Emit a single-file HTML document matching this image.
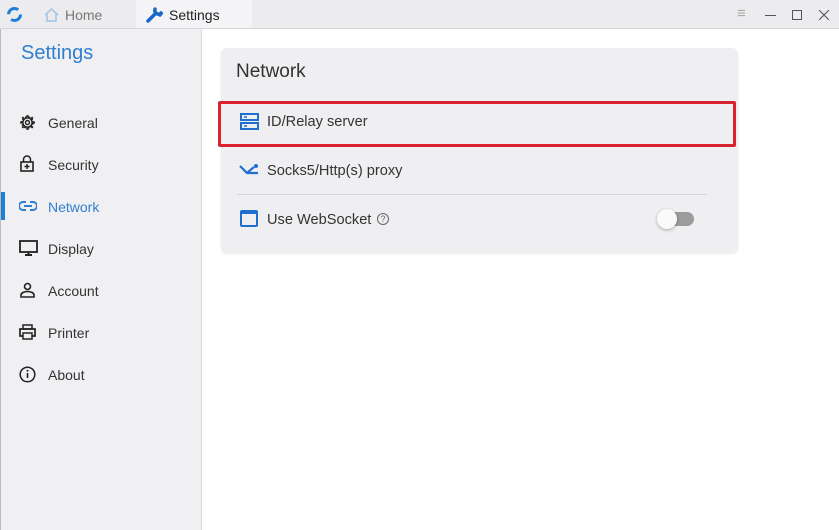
<!DOCTYPE html>
<html><head><style>
*{margin:0;padding:0;box-sizing:border-box}
body{width:839px;height:530px;overflow:hidden;font-family:"Liberation Sans",sans-serif;background:#fff;position:relative}
.tb{position:absolute;left:0;top:0;width:839px;height:29px;background:#ececee;border-bottom:1px solid #d6d6d8}
.tab2{position:absolute;left:136px;top:0;width:116px;height:28px;background:#f4f4f6}
.t{position:absolute;font-size:14px;white-space:nowrap}
.c{font-size:14.6px}
.side{position:absolute;left:0;top:29px;width:202px;height:501px;background:#f0f0f3;border-right:1px solid #dcdcdf;border-left:1px solid #bbb}
.card{position:absolute;left:221px;top:48px;width:517px;height:205px;background:#efeff1;border-radius:6px;box-shadow:0 1px 2px rgba(0,0,0,.08)}
svg{position:absolute}
</style></head><body>
<div class="tb"></div><div class="tab2"></div>
<svg style="left:6px;top:6px" width="17" height="17" viewBox="0 0 17 17"><circle cx="8.5" cy="8.5" r="6" fill="none" stroke="#1e7fd6" stroke-width="3" stroke-dasharray="13 6"/></svg>
<svg style="left:44px;top:8px" width="15" height="14" viewBox="0 0 15 14"><path d="M1 7L7.5 1 14 7M3 6v7h9V6" fill="none" stroke="#9cc3ea" stroke-width="1.5"/></svg>
<div class="t" style="left:65px;top:7px;color:#777">Home</div>
<svg style="left:146px;top:6px" width="18" height="17" viewBox="0 0 18 17"><path d="M2 15L10 7M9 3a4 4 0 0 0 5 5l2-2-2 3" stroke="#1a66c9" stroke-width="3.5" fill="none" stroke-linecap="round"/></svg>
<div class="t" style="left:169px;top:7px;color:#222">Settings</div>
<div class="t" style="left:737px;top:5px;color:#aaa;font-size:15px">≡</div>
<div style="position:absolute;left:765px;top:15px;width:11px;height:1px;background:#555"></div>
<div style="position:absolute;left:792px;top:10px;width:10px;height:10px;border:1px solid #555"></div>
<svg style="left:819px;top:10px" width="10" height="10" viewBox="0 0 10 10"><path d="M0 0L10 10M10 0L0 10" stroke="#555" stroke-width="1.1"/></svg>
<div class="side"></div>
<div class="t" style="left:21px;top:42px;color:#2f7fd0;font-size:20px">Settings</div>
<div style="position:absolute;left:1px;top:192px;width:4px;height:28px;background:#1e7fd6"></div>
<svg style="left:19px;top:114px" width="17" height="17" viewBox="0 0 17 17"><circle cx="8.5" cy="8.5" r="5.5" fill="none" stroke="#222" stroke-width="1.6" stroke-dasharray="2.2 1.1"/><circle cx="8.5" cy="8.5" r="4.6" fill="none" stroke="#222" stroke-width="1.4"/><circle cx="8.5" cy="8.5" r="2" fill="none" stroke="#222" stroke-width="1.4"/><path d="M8.5 1v2M8.5 14v2M1 8.5h2M14 8.5h2M3.2 3.2l1.4 1.4M12.4 12.4l1.4 1.4M3.2 13.8l1.4-1.4M12.4 4.6l1.4-1.4" stroke="#222" stroke-width="2"/></svg>
<div class="t" style="left:48px;top:115px;color:#333">General</div>
<svg style="left:20px;top:155px" width="15" height="17" viewBox="0 0 15 17"><rect x="1" y="7" width="12" height="9" fill="none" stroke="#222" stroke-width="1.6"/><path d="M3.5 7V4.5a3.5 3.5 0 0 1 7 0V7M7 9v5M4.5 11.5h5" fill="none" stroke="#222" stroke-width="1.5"/></svg>
<div class="t" style="left:48px;top:157px;color:#333">Security</div>
<svg style="left:19px;top:200px" width="18" height="12" viewBox="0 0 18 12"><path d="M7 2H4a4 4 0 0 0 0 8h3M11 2h3a4 4 0 0 1 0 8h-3M5 6h8" fill="none" stroke="#2f7fd0" stroke-width="2"/></svg>
<div class="t" style="left:48px;top:199px;color:#2f7fd0">Network</div>
<svg style="left:19px;top:240px" width="19" height="17" viewBox="0 0 19 17"><rect x="1" y="1" width="17" height="11" fill="none" stroke="#222" stroke-width="1.8"/><path d="M6 15h7M9.5 12v3" stroke="#222" stroke-width="2"/></svg>
<div class="t" style="left:48px;top:241px;color:#333">Display</div>
<svg style="left:20px;top:282px" width="15" height="16" viewBox="0 0 15 16"><circle cx="7.5" cy="4.5" r="3" fill="none" stroke="#222" stroke-width="1.6"/><path d="M1 15v-2c0-2 3-3.5 6.5-3.5S14 11 14 13v2z" fill="none" stroke="#222" stroke-width="1.6"/></svg>
<div class="t" style="left:48px;top:283px;color:#333">Account</div>
<svg style="left:19px;top:324px" width="17" height="16" viewBox="0 0 17 16"><rect x="1" y="5" width="15" height="7" fill="none" stroke="#222" stroke-width="1.7"/><rect x="4" y="1" width="9" height="4" fill="none" stroke="#222" stroke-width="1.5"/><rect x="4" y="9" width="9" height="6" fill="#f0f0f3" stroke="#222" stroke-width="1.5"/></svg>
<div class="t" style="left:48px;top:325px;color:#333">Printer</div>
<svg style="left:19px;top:366px" width="17" height="17" viewBox="0 0 17 17"><circle cx="8.5" cy="8.5" r="7.3" fill="none" stroke="#222" stroke-width="1.5"/><path d="M8.5 7v5" stroke="#222" stroke-width="1.6"/><circle cx="8.5" cy="4.8" r="1" fill="#222"/></svg>
<div class="t" style="left:48px;top:367px;color:#333">About</div>
<div class="card"></div>
<div class="t" style="left:236px;top:61px;font-size:19px;color:#333">Network</div>
<div style="position:absolute;left:218px;top:101px;width:518px;height:46px;border:3px solid #d9232e;border-radius:2px"></div>
<svg style="left:240px;top:113px" width="19" height="17" viewBox="0 0 19 17"><rect x="1" y="1" width="17" height="6" fill="none" stroke="#1e6fd0" stroke-width="2"/><rect x="1" y="10" width="17" height="6" fill="none" stroke="#1e6fd0" stroke-width="2"/><path d="M4 4h3M4 13h3" stroke="#1e6fd0" stroke-width="1.5"/></svg>
<div class="t c" style="left:267px;top:114px;color:#333">ID/Relay server</div>
<svg style="left:239px;top:163px" width="20" height="13" viewBox="0 0 20 13"><path d="M1 3l7 7h11M8 10l7-6" fill="none" stroke="#1e6fd0" stroke-width="2.2"/><circle cx="17" cy="3" r="2" fill="#1e6fd0"/></svg>
<div class="t c" style="left:267px;top:163px;color:#333">Socks5/Http(s) proxy</div>
<div style="position:absolute;left:237px;top:194px;width:470px;height:1px;background:#d4d4d6"></div>
<div style="position:absolute;left:240px;top:210px;width:18px;height:17px;border:2px solid #1e6fd0;border-top-width:4px;border-radius:2px"></div>
<div class="t c" style="left:267px;top:212px;color:#333">Use WebSocket</div>
<div style="position:absolute;left:377px;top:213px;width:12px;height:12px;border:1.3px solid #666;border-radius:50%;font-size:9px;text-align:center;line-height:10px;color:#666">?</div>
<div style="position:absolute;left:660px;top:212px;width:34px;height:14px;border-radius:7px;background:#9c9c9c"></div>
<div style="position:absolute;left:657px;top:209px;width:20px;height:20px;border-radius:50%;background:#fafafa;box-shadow:0 1px 3px rgba(0,0,0,.3)"></div>
</body></html>
